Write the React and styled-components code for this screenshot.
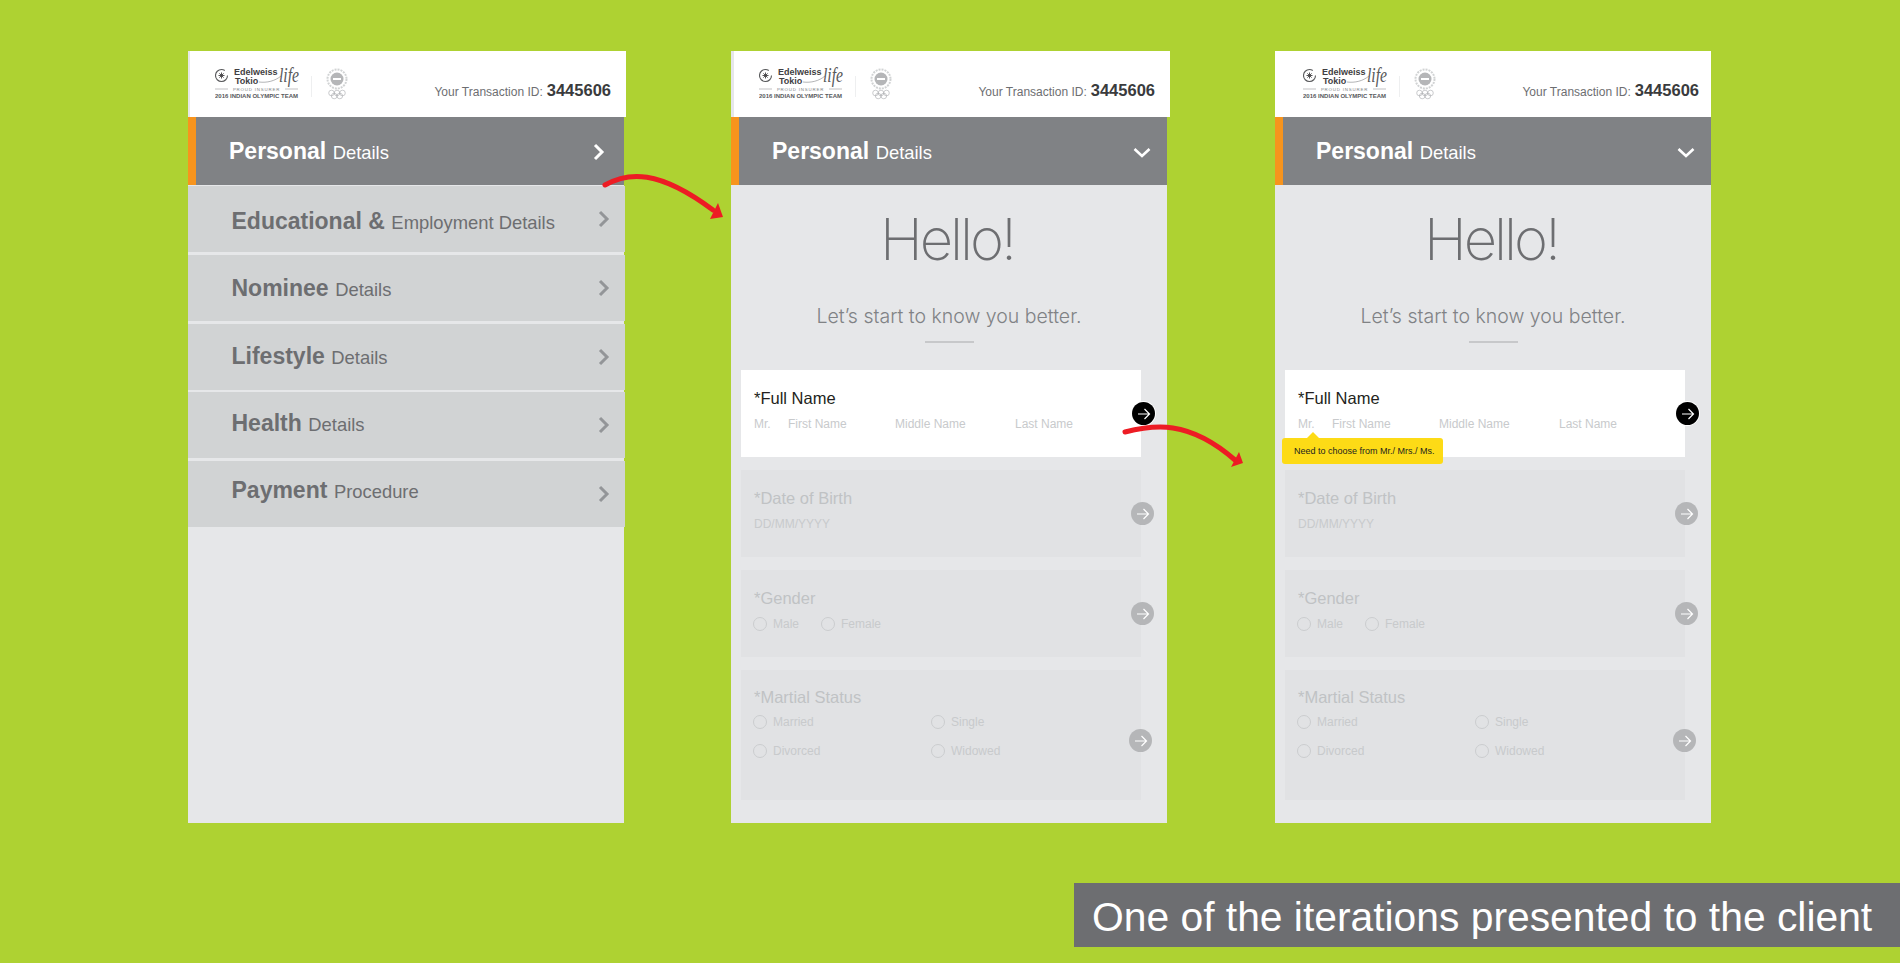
import React from 'react';
import styled, { createGlobalStyle } from 'styled-components';

const GlobalStyle = createGlobalStyle`
  html, body {
    margin: 0;
    padding: 0;
  }
  body {
    font-family: "Liberation Sans", Arial, sans-serif;
    background-color: #aed232;
  }
`;

const Page = styled.div`
  position: relative;
  display: flex;
  flex-direction: column;
  width: 1900px;
  height: 963px;
  padding-top: 51px;
  box-sizing: border-box;
  overflow: hidden;
  background-color: #aed232;
`;

const Screens = styled.div`
  display: flex;
  gap: 107px;
  padding-left: 188px;
`;

const Phone = styled.div`
  display: flex;
  flex-direction: column;
  width: 436px;
  height: 772px;
  margin-left: ${({ $offset }) => $offset || 0}px;
  background-color: #e6e7e9;
`;

const Header = styled.div`
  display: flex;
  align-items: flex-start;
  justify-content: space-between;
  height: 66px;
  margin-left: ${({ $shift }) => $shift}px;
  margin-right: ${({ $shift }) => -$shift}px;
  padding: 11px ${({ $inset }) => 15 - $inset}px 0 ${({ $inset }) => 25 + $inset}px;
  box-sizing: border-box;
  background-color: #fff;
`;

const Transaction = styled.div`
  margin-top: 18px;
  font-size: 12px;
  line-height: 20px;
  color: #6d6e71;
  white-space: nowrap;

  b {
    margin-left: 4px;
    font-size: 16.5px;
    color: #3a3b3d;
  }
`;

const Row = styled.div`
  display: flex;
  align-items: center;
  justify-content: space-between;
  height: ${({ $active }) => ($active ? 68 : 66)}px;
  margin-bottom: ${({ $active }) => ($active ? 0 : 2.75)}px;
  margin-right: ${({ $active }) => ($active ? 0 : -1)}px;
  padding: ${({ $active }) => ($active ? 2 : 0)}px ${({ $active }) => ($active ? 19 : 15)}px 0
    ${({ $active }) => ($active ? 33 : 43.5)}px;
  box-sizing: border-box;
  border-left: ${({ $active }) => ($active ? '8px solid #f7941d' : 'none')};
  background-color: ${({ $active }) => ($active ? '#808285' : '#d1d3d4')};
  color: ${({ $active }) => ($active ? '#fff' : '#6d6e71')};
`;

const RowLabel = styled.div`
  padding-top: ${({ $nudge = 0 }) => Math.max(0, $nudge * 2)}px;
  padding-bottom: ${({ $nudge = 0 }) => Math.max(0, -$nudge * 2)}px;
  white-space: nowrap;
  font-size: 18.4px;
  line-height: 24px;

  b {
    font-size: 23px;
    margin-right: 6.5px;
  }
`;

const MenuGap = styled.div`
  height: 1px;
`;

const Intro = styled.div`
  display: flex;
  flex-direction: column;
  align-items: center;
  height: 185px;
  box-sizing: border-box;
  padding-top: 19px;
`;

const Hello = styled.h1`
  margin: 0 4px 0 0;
  font-family: Inter, sans-serif;
  font-size: 58px;
  font-weight: 200;
  line-height: 70px;
  letter-spacing: -3px;
  color: #6d6e71;
`;

const Lead = styled.p`
  margin: 30px 0 0;
  font-family: Inter, sans-serif;
  font-size: 19.5px;
  font-weight: 300;
  line-height: 24px;
  color: #808285;
`;

const Rule = styled.div`
  width: 49px;
  height: 2px;
  margin-top: 13px;
  background-color: #c7c8ca;
`;

const Cards = styled.div`
  display: flex;
  flex-direction: column;
  gap: 13px;
  padding-left: 10px;
`;

const Card = styled.div`
  position: relative;
  width: 400px;
  height: ${({ $height }) => $height}px;
  padding: ${({ $top }) => $top || 18}px 13px 0;
  box-sizing: border-box;
  background-color: ${({ $on }) => ($on ? '#fff' : '#e1e2e4')};
  color: ${({ $on }) => ($on ? '#231f20' : '#c0c2c4')};
`;

const CardTitle = styled.div`
  font-size: 16.5px;
  line-height: 20px;
`;

const Fields = styled.div`
  display: grid;
  grid-template-columns: ${({ $columns }) => $columns};
  margin-top: ${({ $top }) => $top}px;
  font-size: 12px;
  line-height: 16px;
  color: #c8cacc;
`;

const Option = styled.label`
  display: flex;
  align-items: center;
  gap: 6px;
  margin-left: -1px;
  height: ${({ $tall }) => ($tall ? 29 : 16)}px;
  font-size: 12px;
  color: #c8cacc;
`;

const Radio = styled.span`
  width: 12px;
  height: 12px;
  border: 1px solid #cbcdcf;
  border-radius: 50%;
`;

const Go = styled.div`
  position: absolute;
  left: ${({ $left }) => $left}px;
  top: ${({ $top }) => $top}px;
  display: flex;
  align-items: center;
  justify-content: center;
  width: 23px;
  height: 23px;
  border-radius: 50%;
  background-color: ${({ $on }) => ($on ? '#000' : '#b5b6b8')};
  box-shadow: ${({ $on }) => ($on ? '0 0 0 1px #fff' : 'none')};
`;

const Tip = styled.div`
  position: absolute;
  left: -3px;
  top: 68px;
  width: 161px;
  height: 26px;
  padding-left: 12px;
  box-sizing: border-box;
  border-radius: 3px;
  background-color: #fddb16;
  color: #231f20;
  font-size: 9px;
  line-height: 26px;
  white-space: nowrap;

  &::before {
    content: '';
    position: absolute;
    left: 25px;
    top: -6px;
    border-left: 6px solid transparent;
    border-right: 6px solid transparent;
    border-bottom: 6px solid #fddb16;
  }
`;

const Caption = styled.div`
  align-self: flex-end;
  width: 826px;
  height: 64px;
  margin-top: 60px;
  padding-left: 18px;
  box-sizing: border-box;
  background-color: #6d6e71;
  color: #fff;
  font-size: 40.8px;
  line-height: 68px;
  white-space: nowrap;
`;

const RedArrow = styled.svg`
  position: absolute;
  left: ${({ $left }) => $left}px;
  top: ${({ $top }) => $top}px;
  overflow: visible;
`;

const DownIcon = styled.svg`
  margin-right: -3px;
`;

const Logo = () => (
  <svg width="140" height="44" viewBox="0 -4 140 44">
    <circle cx="6.5" cy="9.5" r="6" fill="none" stroke="#58595b" strokeWidth="1.1" strokeDasharray="31 6" />
    <path d="M3.5 9.5h6M6.5 6.5v6M4.4 7.4l4.2 4.2M8.6 7.4l-4.2 4.2" stroke="#414042" strokeWidth="0.9" />
    <text x="19" y="9" fontSize="9" fontWeight="700" fill="#414042" fontFamily="Liberation Sans">Edelweiss</text>
    <text x="20" y="17.5" fontSize="9" fontWeight="700" fill="#414042" fontFamily="Liberation Sans">Tokio</text>
    <path d="M44 16c8 1 16-1 22-6" fill="none" stroke="#808285" strokeWidth="0.6" />
    <text x="64" y="16" fontSize="20" fontStyle="italic" fill="#58595b" textLength="20" lengthAdjust="spacingAndGlyphs" fontFamily="Liberation Serif">life</text>
    <path d="M0 23h13M70 23h13" stroke="#808285" strokeWidth="0.5" />
    <text x="41.5" y="25" textAnchor="middle" fontSize="4.4" letterSpacing="0.8" fill="#808285" fontFamily="Liberation Sans">PROUD INSURER</text>
    <text x="0" y="32" fontSize="6" fontWeight="700" fill="#58595b" textLength="83" fontFamily="Liberation Sans">2016 INDIAN OLYMPIC TEAM</text>
    <path d="M96.5 10v21" stroke="#eeeff0" strokeWidth="1" />
    <circle cx="122" cy="13" r="9.5" fill="none" stroke="#d1d3d4" strokeWidth="2" strokeDasharray="2 1" />
    <circle cx="122" cy="13" r="6.5" fill="#b5b6b8" />
    <rect x="118" y="12" width="8" height="2" fill="#fff" />
    <g fill="none" stroke="#a7a9ac" strokeWidth="0.6">
      <circle cx="116.5" cy="27" r="2.8" />
      <circle cx="122" cy="27" r="2.8" />
      <circle cx="127.5" cy="27" r="2.8" />
      <circle cx="119.2" cy="30" r="2.8" />
      <circle cx="124.8" cy="30" r="2.8" />
    </g>
  </svg>
);

const ChevronRight = ({ color }) => (
  <svg width="13" height="18" viewBox="0 0 13 18">
    <path d="M3 2l7 7-7 7" fill="none" stroke={color} strokeWidth="3" />
  </svg>
);

const ChevronDown = () => (
  <DownIcon width="18" height="11" viewBox="0 0 18 11">
    <path d="M1.5 2l7.5 7 7.5-7" fill="none" stroke="#fff" strokeWidth="2.6" />
  </DownIcon>
);

const ArrowIcon = () => (
  <svg width="14" height="12" viewBox="0 0 14 12">
    <path d="M1 6h11.5M7.5 1l5 5-5 5" fill="none" stroke="#fff" strokeWidth="1.2" />
  </svg>
);

const menu = [
  { strong: 'Educational &', light: 'Employment Details', nudge: 2.5 },
  { strong: 'Nominee', light: 'Details', nudge: 1 },
  { strong: 'Lifestyle', light: 'Details', nudge: 0 },
  { strong: 'Health', light: 'Details', nudge: -1.75 },
  { strong: 'Payment', light: 'Procedure', nudge: -3 },
];

const TopBar = ({ shift, inset = 0 }) => (
  <Header $shift={shift} $inset={inset}>
    <Logo />
    <Transaction>
      Your Transaction ID:<b>3445606</b>
    </Transaction>
  </Header>
);

const Personal = ({ open }) => (
  <Row $active>
    <RowLabel>
      <b>Personal</b>Details
    </RowLabel>
    {open ? <ChevronDown /> : <ChevronRight color="#fff" />}
  </Row>
);

const FormCards = ({ tip }) => (
  <Cards>
    <Card $on $height={87}>
      <CardTitle>*Full Name</CardTitle>
      <Fields $columns="34px 107px 120px 1fr" $top={8}>
        <span>Mr.</span>
        <span>First Name</span>
        <span>Middle Name</span>
        <span>Last Name</span>
      </Fields>
      {tip && <Tip>Need to choose from Mr./ Mrs./ Ms.</Tip>}
      <Go $on $top={32} $left={391}>
        <ArrowIcon />
      </Go>
    </Card>
    <Card $height={87}>
      <CardTitle>*Date of Birth</CardTitle>
      <Fields $columns="1fr" $top={8}>
        <span>DD/MM/YYYY</span>
      </Fields>
      <Go $top={32} $left={390}>
        <ArrowIcon />
      </Go>
    </Card>
    <Card $height={87}>
      <CardTitle>*Gender</CardTitle>
      <Fields $columns="68px 1fr" $top={8}>
        <Option>
          <Radio />
          Male
        </Option>
        <Option>
          <Radio />
          Female
        </Option>
      </Fields>
      <Go $top={32} $left={390}>
        <ArrowIcon />
      </Go>
    </Card>
    <Card $height={130} $top={17}>
      <CardTitle>*Martial Status</CardTitle>
      <Fields $columns="178px 1fr" $top={0}>
        <Option $tall>
          <Radio />
          Married
        </Option>
        <Option $tall>
          <Radio />
          Single
        </Option>
        <Option $tall>
          <Radio />
          Divorced
        </Option>
        <Option $tall>
          <Radio />
          Widowed
        </Option>
      </Fields>
      <Go $top={59} $left={388}>
        <ArrowIcon />
      </Go>
    </Card>
  </Cards>
);

const FormScreen = ({ shift, inset, offset, tip }) => (
  <Phone $offset={offset}>
    <TopBar shift={shift} inset={inset} />
    <Personal open />
    <Intro>
      <Hello>Hello!</Hello>
      <Lead>Let’s start to know you better.</Lead>
      <Rule />
    </Intro>
    <FormCards tip={tip} />
  </Phone>
);

export default function App() {
  return (
    <Page>
      <GlobalStyle />
      <Screens>
        <Phone>
          <TopBar shift={2} />
          <Personal />
          <MenuGap />
          <div>
            {menu.map(({ strong, light, nudge }) => (
              <Row key={strong}>
                <RowLabel $nudge={nudge}>
                  <b>{strong}</b>
                  {light}
                </RowLabel>
                <ChevronRight color="#939598" />
              </Row>
            ))}
          </div>
        </Phone>
        <FormScreen shift={3} />
        <FormScreen shift={0} inset={3} offset={1} tip />
      </Screens>
      <Caption>One of the iterations presented to the client</Caption>
      <RedArrow $left={603} $top={170} width="122" height="52" viewBox="0 0 122 52">
        <path d="M2 15C25 2 55-1 110 40" fill="none" stroke="#ed1c24" strokeWidth="5" strokeLinecap="round" />
        <path d="M120 47L107 49L115 33Z" fill="#ed1c24" />
      </RedArrow>
      <RedArrow $left={1123} $top={420} width="122" height="48" viewBox="0 0 122 48">
        <path d="M2 12C30 5 65-1 112 40" fill="none" stroke="#ed1c24" strokeWidth="5" strokeLinecap="round" />
        <path d="M120 43L108 47L116 32Z" fill="#ed1c24" />
      </RedArrow>
    </Page>
  );
}
